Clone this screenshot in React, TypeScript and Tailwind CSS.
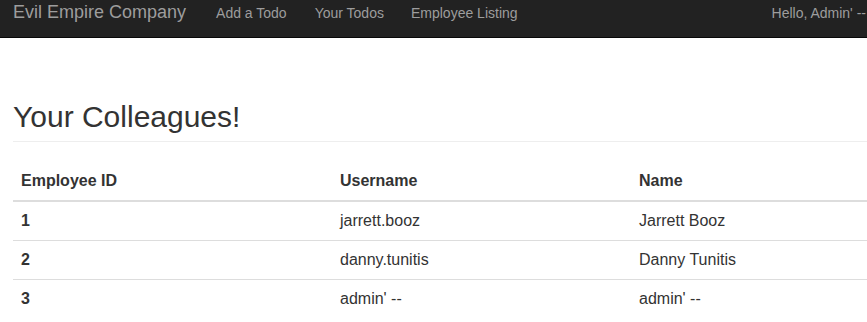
const employees = [
  { id: 1, username: 'jarrett.booz', name: 'Jarrett Booz' },
  { id: 2, username: 'danny.tunitis', name: 'Danny Tunitis' },
  { id: 3, username: "admin' --", name: "admin' --" },
]

export default function App() {
  return (
    <div className="min-h-screen bg-white text-[#333] overflow-hidden" style={{ fontFamily: '"Liberation Sans", Arial, sans-serif' }}>
      <nav className="h-[38px] bg-[#222] border-b border-[#080808] flex items-baseline pt-[2px] pl-[13px] pr-[1px] text-[#9d9d9d] whitespace-nowrap">
        <a className="text-[18px] leading-[20px]">Evil Empire Company</a>
        <a className="ml-[30px] text-[14px] leading-[20px]">Add a Todo</a>
        <a className="ml-[28px] text-[14px] leading-[20px]">Your Todos</a>
        <a className="ml-[27px] text-[14px] leading-[20px]">Employee Listing</a>
        <span className="ml-auto text-[14px] leading-[20px]">Hello, Admin' --</span>
      </nav>

      <div className="pl-[13px]">
        <h1 className="mt-[62px] pb-[8px] border-b border-[#eee] text-[30px] leading-[33px] font-normal">Your Colleagues!</h1>

        <table className="mt-[20px] w-[900px] border-collapse text-[16px] leading-[22px] text-left">
          <thead>
            <tr>
              <th className="w-[319px] px-[8px] py-[8px] font-bold border-b-2 border-[#ddd]">Employee ID</th>
              <th className="w-[299px] px-[8px] py-[8px] font-bold border-b-2 border-[#ddd]">Username</th>
              <th className="px-[8px] py-[8px] font-bold border-b-2 border-[#ddd]">Name</th>
            </tr>
          </thead>
          <tbody>
            {employees.map((e, i) => (
              <tr key={e.id} className={i > 0 ? 'border-t border-[#ddd]' : ''}>
                <td className="px-[8px] py-[8px] font-bold">{e.id}</td>
                <td className="px-[8px] py-[8px]">{e.username}</td>
                <td className="px-[8px] py-[8px]">{e.name}</td>
              </tr>
            ))}
          </tbody>
        </table>
      </div>
    </div>
  )
}
